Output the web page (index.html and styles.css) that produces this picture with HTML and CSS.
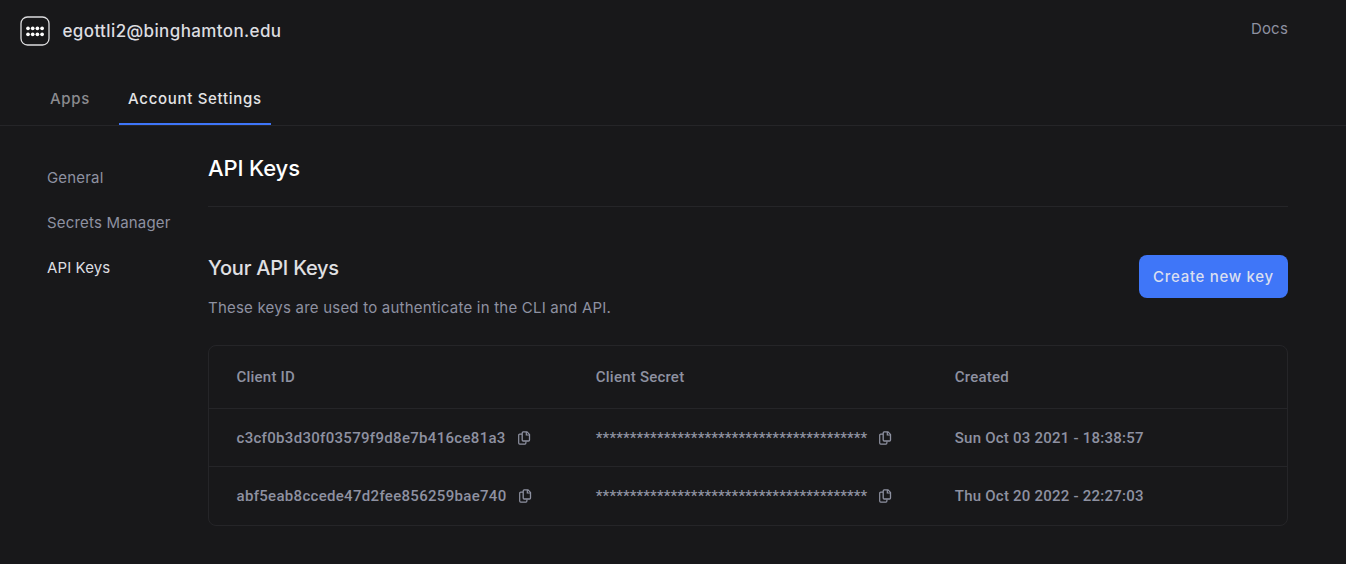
FILE: index.html
```html
<!DOCTYPE html>
<html lang="en">
<head>
<meta charset="utf-8">
<title>API Keys</title>
<link rel="stylesheet" href="styles.css">
</head>
<body>
<svg class="sprite" aria-hidden="true">
  <symbol id="copy" viewBox="0 0 14 14">
    <path d="M6.200 .9h3.800l2.500 2.500v5.600q0 1-1 1H6.200q-1 0-1-1V1.900q0-1 1-1z" fill="none" stroke="currentColor" stroke-width="1.300"/>
    <path d="M9.300 1v3h3M5 3.200H2.700q-1 0-1 1v7.900q0 1 1 1h5.200q1 0 1-1v-1.500" fill="none" stroke="currentColor" stroke-width="1.200"/>
  </symbol>
</svg>
<header class="topbar">
  <div class="account">
    <svg class="logo" viewBox="0 0 30 30">
      <rect x="1" y="1" width="28" height="28" rx="6.500" fill="none" stroke="#dcdcde" stroke-width="1.3"/>
      <g fill="#fff">
        <circle cx="8" cy="12.300" r="1.850"/><circle cx="12.700" cy="12.300" r="1.850"/><circle cx="17.400" cy="12.300" r="1.850"/><circle cx="22.100" cy="12.300" r="1.850"/>
        <circle cx="8" cy="18.300" r="1.850"/><circle cx="12.700" cy="18.300" r="1.850"/><circle cx="17.400" cy="18.300" r="1.850"/><circle cx="22.100" cy="18.300" r="1.850"/>
      </g>
    </svg>
    <span class="email">egottli2@binghamton.edu</span>
  </div>
  <a class="docs">Docs</a>
</header>
<nav class="tabs">
  <a class="tab">Apps</a>
  <a class="tab tab-active">Account Settings</a>
</nav>
<div class="page">
  <aside class="sidebar">
    <a class="side-link">General</a>
    <a class="side-link">Secrets Manager</a>
    <a class="side-link side-active">API Keys</a>
  </aside>
  <main class="content">
    <h1 class="title">API Keys</h1>
    <section class="intro">
      <div>
        <h2 class="subtitle">Your API Keys</h2>
        <p class="description">These keys are used to authenticate in the CLI and API.</p>
      </div>
      <button class="create">Create new key</button>
    </section>
    <div class="table">
      <div class="row head"><span>Client ID</span><span>Client Secret</span><span>Created</span></div>
      <div class="row">
        <div class="cell"><span>c3cf0b3d30f03579f9d8e7b416ce81a3</span><svg class="copy"><use href="#copy"/></svg></div>
        <div class="cell"><span class="secret">****************************************</span><svg class="copy"><use href="#copy"/></svg></div>
        <div class="cell"><span class="date">Sun Oct 03 2021 - 18:38:57</span></div>
      </div>
      <div class="row">
        <div class="cell"><span>abf5eab8ccede47d2fee856259bae740</span><svg class="copy"><use href="#copy"/></svg></div>
        <div class="cell"><span class="secret">****************************************</span><svg class="copy"><use href="#copy"/></svg></div>
        <div class="cell"><span class="date">Thu Oct 20 2022 - 22:27:03</span></div>
      </div>
    </div>
  </main>
</div>
</body>
</html>
```
FILE: styles.css
```css
* { box-sizing: border-box; }
body { margin: 0; height: 564px; overflow: hidden; background: #18181a; color: #8e91a1; font-family: Inter, sans-serif; font-size: 15px; }
h1, h2, p { margin: 0; }
.sprite { display: none; }
.topbar { display: flex; justify-content: space-between; height: 75px; padding: 16px 58px 0 19.500px; }
.account { display: flex; height: 30px; align-items: center; gap: 13px; }
.logo { width: 30px; height: 30px; }
.email { font-size: 17px; font-weight: 450; line-height: 30px; letter-spacing: 0.38px; color: #dddde0; }
.docs { line-height: 26px; letter-spacing: 0.2px; }
.tabs { display: flex; gap: 20px; height: 51px; padding-left: 41px; border-bottom: 1px solid #252528; }
.tab { height: 50px; padding: 0 9px; line-height: 48px; font-weight: 450; letter-spacing: 0.7px; color: #8b8b8f; border-bottom: 2px solid transparent; }
.tab-active { width: 152px; padding-right: 0; white-space: nowrap; color: #e4e4e6; border-color: #3e75f8; }
.page { display: flex; padding: 0 58px 0 47px; }
.sidebar { width: 161px; padding-top: 29px; display: flex; flex-direction: column; }
.side-link { height: 45px; line-height: 45px; letter-spacing: 0.18px; }
.side-active { color: #dddde0; letter-spacing: 0.1px; }
.content { flex: 1; }
.title { height: 81px; padding-top: 26px; line-height: 32px; font-size: 22px; font-weight: 450; letter-spacing: -0.12px; color: #fff; border-bottom: 1px solid #252528; }
.intro { display: flex; justify-content: space-between; height: 138px; padding-top: 48px; }
.subtitle { font-size: 20px; font-weight: 450; line-height: 27px; letter-spacing: -0.22px; color: #e0e0e3; }
.description { margin-top: 13px; line-height: 26px; letter-spacing: 0.22px; }
.create { width: 149px; height: 43px; padding: 0; border: 0; border-radius: 8px; background: #3f76f8; color: #dadff0; font: 450 15px/43px Inter, sans-serif; letter-spacing: 0.7px; }
.table { height: 181px; border: 1px solid #252528; border-radius: 8px; font-family: Roboto, sans-serif; font-weight: 500; }
.row { display: grid; grid-template-columns: 359.300px 359px 1fr; align-items: center; height: 58px; padding-left: 27.500px; border-bottom: 1px solid #252528; letter-spacing: 0.31px; }
.row:last-child { border-bottom: 0; height: 58px; }
.head { height: 63px; letter-spacing: 0.22px; }
.cell { display: flex; align-items: center; gap: 11px; }
.secret { letter-spacing: 0.14px; }
.date { letter-spacing: 0.23px; }
.copy { width: 14px; height: 14px; }
```
